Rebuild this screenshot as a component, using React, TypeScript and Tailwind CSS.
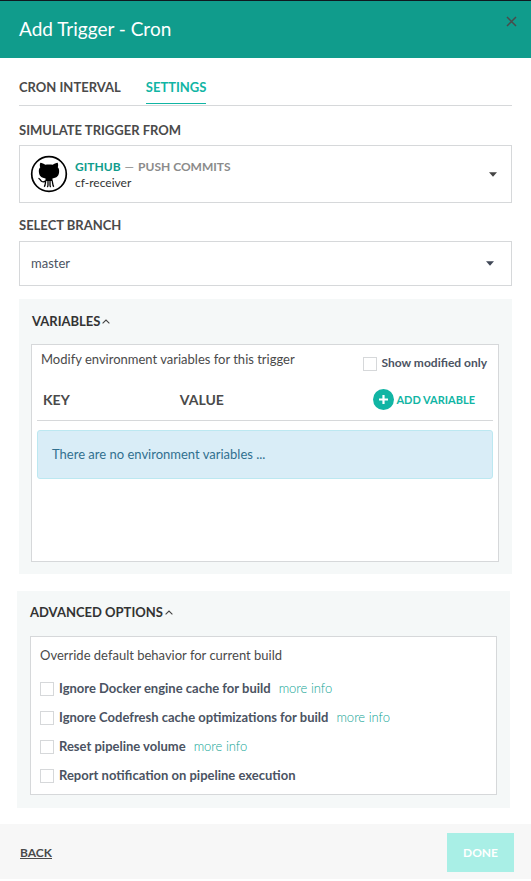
import { useState } from "react";

function Caret({ className }: { className: string }) {
  return (
    <svg className={className} width="8" height="5" viewBox="0 0 8 5" aria-hidden="true">
      <path d="M0 0.200h8L4 4.800z" fill="currentColor" />
    </svg>
  );
}

function Chevron() {
  return (
    <svg width="8" height="5" viewBox="0 0 8 5" fill="none" stroke="#444" strokeWidth="1.1" aria-hidden="true">
      <path d="M0.6 4.4L4 1l3.4 3.4" />
    </svg>
  );
}

function Octocat() {
  return (
    <svg width="38" height="38" viewBox="0 0 38 38" aria-hidden="true">
      <circle cx="19" cy="19" r="17.3" fill="#fff" stroke="#000" strokeWidth="1.7" />
      <path
        d="M10.3 7.8c1.800 0 3.600 1 4.900 2 2.400-.5 5.200-.5 7.600 0 1.300-1 3.100-2 4.900-2 .6 1.500.6 3.100.1 4.500 1.200 1.300 1.500 3 1.300 5-.4 4.600-3.500 6.400-10.100 6.400S9.300 21.900 8.900 17.300c-.2-2 .1-3.700 1.300-5-.5-1.400-.5-3 .1-4.500z"
        fill="#000"
      />
      <path d="M15.500 22h7v4h-7z" fill="#000" />
      <path
        d="M8.400 23.300c1.600.1 2 2.500 3.500 3.200 1.200.6 2.800.2 4-.6M16 25.500c-.9 1.500-.3 4.700-1.800 6.300M18 25.500v4.500c0 .9-.2 1.500-.7 2M20 25.500v4.500c0 .9.200 1.500.7 2M22 25.500c.9 1.500.3 4.700 1.800 6.300"
        fill="none"
        stroke="#000"
        strokeWidth="1.300"
      />
    </svg>
  );
}

function Check({ id, label }: { id: string; label: string }) {
  return (
    <span className="flex items-center gap-[5px]">
      <input
        id={id}
        type="checkbox"
        className="size-[14px] shrink-0 appearance-none border border-[#d6d8da] bg-white checked:bg-[#11b5a4]"
      />
      <label htmlFor={id} className="pb-[2px] leading-[18px] font-bold text-[#4b5362]">
        {label}
      </label>
    </span>
  );
}

const options = [
  { id: "docker-cache", label: "Ignore Docker engine cache for build", info: true },
  { id: "codefresh-cache", label: "Ignore Codefresh cache optimizations for build", info: true },
  { id: "reset-volume", label: "Reset pipeline volume", info: true },
  { id: "report", label: "Report notification on pipeline execution", info: false },
];

export default function App() {
  const [varsOpen, setVarsOpen] = useState(true);
  const [advOpen, setAdvOpen] = useState(true);

  return (
    <div className="bg-white font-['Lato',sans-serif] text-[13px] leading-5 text-[#4a4a4a]">
      <header className="flex h-[58px] items-start justify-between border-t border-[#101820] bg-[#109c8c] pr-[14px] pl-[19px]">
        <h1 className="pt-4 text-[19px] leading-6 text-white">Add Trigger - Cron</h1>
        <button type="button" aria-label="Close" className="pt-[15px] text-[#4a4a4a]">
          <svg width="11" height="11" viewBox="0 0 11 11" stroke="currentColor" strokeWidth="1.500" aria-hidden="true">
            <path d="M1 1l9 9M10 1l-9 9" />
          </svg>
        </button>
      </header>

      <main className="px-[19px] pb-4">
        <nav className="flex items-start gap-[25px] border-b border-[#d6d8da] pt-[19px] pb-px font-bold">
          <button type="button" className="pb-[7px]">CRON INTERVAL</button>
          <button type="button" className="border-b border-[#11b5a4] pb-[6px] text-[#11b5a4]">SETTINGS</button>
        </nav>

        <h2 id="source" className="pt-[14px] pb-[5px] font-bold">SIMULATE TRIGGER FROM</h2>
        <button
          type="button"
          aria-haspopup="listbox"
          aria-labelledby="source"
          className="flex h-[58px] w-full items-center border border-[#d6d8da] pr-[14px] pl-[10px] text-left"
        >
          <Octocat />
          <span className="ml-[7px] flex-1 pt-px text-[12px] leading-4">
            <span className="block font-bold text-[#8b8b8b]">
              <span className="text-[#109c8c]">GITHUB</span>
              <span className="mx-1 font-normal">—</span>PUSH COMMITS
            </span>
            <span className="block text-[#333]">cf-receiver</span>
          </span>
          <Caret className="text-[#444]" />
        </button>

        <label htmlFor="branch" className="block pt-3 pb-[6px] font-bold">SELECT BRANCH</label>
        <div className="grid items-center">
          <select
            id="branch"
            className="col-start-1 row-start-1 h-[45px] w-full appearance-none border border-[#d6d8da] bg-white px-[11px] pb-[2px] text-[#4b5362]"
          >
            <option>master</option>
          </select>
          <Caret className="pointer-events-none col-start-1 row-start-1 mr-[18px] justify-self-end text-[#3f4756]" />
        </div>

        <section className="mt-[13px] bg-[#f5f8f8] pr-[13px] pb-3 pl-3">
          <h2 className="pt-3 pb-[13px] font-bold text-[#333]">
            <button type="button" aria-expanded={varsOpen} onClick={() => setVarsOpen(!varsOpen)} className="flex items-center gap-[2px] pl-px">
              VARIABLES <Chevron />
            </button>
          </h2>
          {varsOpen && (
            <div className="min-h-[218px] border border-[#d6d8da] bg-white px-[5px] pt-1">
              <div className="flex items-start justify-between pr-[6px] pl-1">
                <p>Modify environment variables for this trigger</p>
                <div className="pt-[5px] text-[12px]">
                  <Check id="modified" label="Show modified only" />
                </div>
              </div>
              <table className="mt-[15px] w-full border-collapse text-left">
                <thead>
                  <tr className="border-b border-[#d6d8da] text-[14px]">
                    <th className="w-[30%] pb-[10px] pl-[6px] font-bold">KEY</th>
                    <th className="pb-[10px] pl-[6px] font-bold">VALUE</th>
                    <th className="pr-[18px] pb-[10px]">
                      <button type="button" className="ml-auto flex items-center gap-[2px] text-[11px] font-bold text-[#11b5a4]">
                        <svg width="21" height="21" viewBox="0 0 21 21" aria-hidden="true">
                          <circle cx="10.500" cy="10.500" r="10.500" fill="#11b5a4" />
                          <path d="M10.500 6v9M6 10.500h9" stroke="#fff" strokeWidth="2.200" />
                        </svg>
                        ADD VARIABLE
                      </button>
                    </th>
                  </tr>
                </thead>
                <tbody>
                  <tr>
                    <td colSpan={3} className="pt-[9px]">
                      <p className="rounded-[3px] border border-[#bce8f1] bg-[#d9edf7] px-[14px] pt-[13px] pb-[14px] text-[#31708f]">
                        There are no environment variables ...
                      </p>
                    </td>
                  </tr>
                </tbody>
              </table>
            </div>
          )}
        </section>

        <section className="mt-[17px] mr-[2px] -ml-[2px] bg-[#f5f8f8] px-[13px] pb-[13px]">
          <h2 className="pt-[11px] pb-[14px] font-bold text-[#333]">
            <button type="button" aria-expanded={advOpen} onClick={() => setAdvOpen(!advOpen)} className="flex items-center gap-[2px]">
              ADVANCED OPTIONS <Chevron />
            </button>
          </h2>
          {advOpen && (
            <div className="border border-[#d6d8da] bg-white px-[9px] pt-2 pb-2">
              <p>Override default behavior for current build</p>
              <ul className="flex flex-col gap-[9px] pt-[14px]">
                {options.map((o) => (
                  <li key={o.id} className="flex items-center gap-2">
                    <Check id={o.id} label={o.label} />
                    {o.info && (
                      <a href="#info" className="pb-[2px] leading-[18px] font-light text-[#11a595]">more info</a>
                    )}
                  </li>
                ))}
              </ul>
            </div>
          )}
        </section>
      </main>

      <footer className="flex h-[55px] items-center justify-between bg-[#f7f7f7] pt-[2px] pr-[17px] pl-[20px] text-[12px] font-bold">
        <button type="button" className="underline">BACK</button>
        <button type="button" disabled className="h-[39px] w-[67px] bg-[#a9efe6] text-white">DONE</button>
      </footer>
    </div>
  );
}
